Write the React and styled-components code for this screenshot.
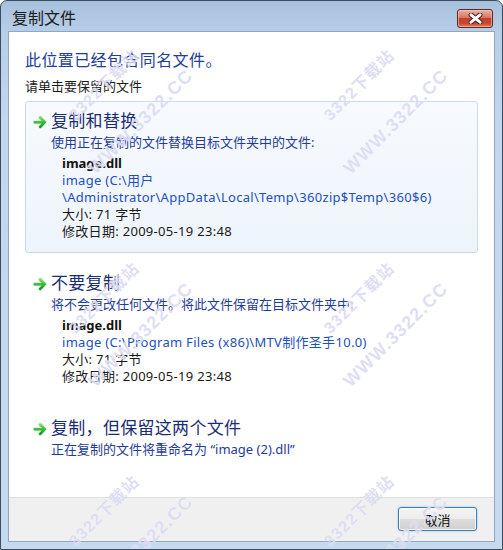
import React from 'react';
import styled, { createGlobalStyle } from 'styled-components';

const GlobalStyle = createGlobalStyle`
  html, body {
    margin: 0;
    padding: 0;
    background: #ffffff;
  }
  body {
    font-family: "Noto Sans", "Noto Sans CJK SC", sans-serif;
  }
`;

const options = [
  {
    title: '复制和替换',
    note: '使用正在复制的文件替换目标文件夹中的文件:',
    active: true,
    file: {
      name: 'image.dll',
      path: ['image (C:\\用户', '\\Administrator\\AppData\\Local\\Temp\\360zip$Temp\\360$6)'],
      size: '大小: 71 字节',
      date: '修改日期: 2009-05-19 23:48',
    },
  },
  {
    title: '不要复制',
    note: '将不会更改任何文件。将此文件保留在目标文件夹中:',
    file: {
      name: 'image.dll',
      path: ['image (C:\\Program Files (x86)\\MTV制作圣手10.0)'],
      size: '大小: 71 字节',
      date: '修改日期: 2009-05-19 23:48',
    },
  },
  {
    title: '复制，但保留这两个文件',
    note: '正在复制的文件将重命名为 “image (2).dll”',
  },
];

// watermark tiles, repeated over the dialog
const marks = [];
for (let col = 0; col < 2; col++) {
  for (let row = 0; row < 3; row++) {
    marks.push({ text: '3322下载站', x: 102 + col * 255, y: 83 + row * 213, big: false });
    marks.push({ text: 'WWW.3322.CC', x: 140 + col * 255, y: 121 + row * 213, big: true });
  }
}

const ArrowIcon = () => (
  <svg width="15" height="14" viewBox="0 0 15 14">
    <defs>
      <linearGradient id="arrowGreen" x1="0" y1="0" x2="0" y2="1">
        <stop offset="0" stopColor="#6fdc5a" />
        <stop offset="1" stopColor="#12952a" />
      </linearGradient>
    </defs>
    <g fill="none" strokeLinecap="round" strokeLinejoin="round">
      <path d="M1.8 7.2 H11.6 M7.2 2.6 L11.8 7.2 L7.2 11.8" stroke="#d9f2d6" strokeWidth="4.4" />
      <path d="M1.8 7.2 H11.6 M7.2 2.6 L11.8 7.2 L7.2 11.8" stroke="url(#arrowGreen)" strokeWidth="2.6" />
    </g>
  </svg>
);

const CloseIcon = () => (
  <svg width="15" height="11" viewBox="0 0 15 11">
    <path d="M3 1.8 L12 9.2 M12 1.8 L3 9.2" stroke="#4a1a12" strokeWidth="4.8" strokeLinecap="round" />
    <path d="M3 1.8 L12 9.2 M12 1.8 L3 9.2" stroke="#ffffff" strokeWidth="3" strokeLinecap="round" />
  </svg>
);

const App = () => {
  return (
    <>
      <GlobalStyle />
      <Window>
        <TitleBar>
          <Title>复制文件</Title>
          <CloseButton aria-label="关闭">
            <CloseIcon />
          </CloseButton>
        </TitleBar>
        <Client>
          <Content>
            <Instruction>此位置已经包含同名文件。</Instruction>
            <Hint>请单击要保留的文件</Hint>
            <OptionList>
              {options.map(opt => (
                <Option key={opt.title} $active={opt.active}>
                  <OptionHead>
                    <ArrowBox>
                      <ArrowIcon />
                    </ArrowBox>
                    <OptionTitle>{opt.title}</OptionTitle>
                  </OptionHead>
                  <OptionBody>
                    <Note>{opt.note}</Note>
                    {opt.file && (
                      <FileInfo>
                        <FileName>{opt.file.name}</FileName>
                        {opt.file.path.map(p => (
                          <FilePath key={p}>{p}</FilePath>
                        ))}
                        <FileMeta>{opt.file.size}</FileMeta>
                        <FileMeta>{opt.file.date}</FileMeta>
                      </FileInfo>
                    )}
                  </OptionBody>
                </Option>
              ))}
            </OptionList>
          </Content>
          <Footer>
            <PushButton>取消</PushButton>
          </Footer>
        </Client>
        <Watermarks>
          {marks.map((m, i) => (
            <Mark key={i} $big={m.big} style={{ left: m.x, top: m.y }}>
              {m.text}
            </Mark>
          ))}
        </Watermarks>
      </Window>
    </>
  );
};

const Window = styled.div`
  position: relative;
  width: 503px;
  height: 550px;
  box-sizing: border-box;
  display: flex;
  flex-direction: column;
  border: 1px solid #3b4b60;
  border-radius: 7px 7px 0 0;
  padding: 0 7px 7px;
  background: linear-gradient(180deg, #a7c0dc 0px, #b7cee8 30px, #c2d7ee 120px, #c6daef 100%);
  overflow: hidden;
`;

const TitleBar = styled.div`
  height: 30px;
  display: flex;
  justify-content: space-between;
  align-items: flex-start;
  padding: 0 2px 0 4px;
`;

const Title = styled.div`
  margin-top: 6px;
  font-size: 16px;
  line-height: 20px;
  color: #1b1b1b;
  font-family: "Noto Sans CJK SC", sans-serif;
`;

const CloseButton = styled.div`
  margin-top: 8px;
  width: 36px;
  height: 19px;
  box-sizing: border-box;
  display: flex;
  align-items: center;
  justify-content: center;
  border: 1px solid #5a2a22;
  border-radius: 3px;
  background: linear-gradient(180deg, #eab1a3 0%, #d9765f 45%, #c0402a 50%, #c84a32 80%, #e07a5a 100%);
  box-shadow: inset 0 0 0 1px rgba(255, 210, 200, 0.55);
`;

const Client = styled.div`
  flex: 1;
  display: flex;
  flex-direction: column;
  border: 1px solid #8fa6c4;
  background: #ffffff;
`;

const Content = styled.div`
  padding: 17px 16px 0 16px;
  display: flex;
  flex-direction: column;
`;

const Instruction = styled.div`
  font-size: 16px;
  line-height: 22px;
  color: #1f3d9a;
  letter-spacing: 0.4px;
`;

const Hint = styled.div`
  margin-top: 6px;
  font-size: 13px;
  line-height: 18px;
  color: #1a1a1a;
`;

const OptionList = styled.div`
  margin-top: 6px;
  display: flex;
  flex-direction: column;
  gap: 10px;
`;

const Option = styled.div`
  border: 1px solid ${props => (props.$active ? '#c8dbf1' : 'transparent')};
  border-radius: 3px;
  background: ${props => (props.$active ? 'linear-gradient(180deg, #f7fafe, #eef4fc)' : 'transparent')};
  padding: 7px 10px 12px 7px;
`;

const OptionHead = styled.div`
  display: flex;
  align-items: center;
  gap: 3px;
`;

const ArrowBox = styled.span`
  display: flex;
  width: 15px;
  height: 14px;
  margin-top: 2px;
`;

const OptionTitle = styled.span`
  font-size: 17px;
  line-height: 24px;
  color: #1a2c72;
  letter-spacing: 0.3px;
`;

const OptionBody = styled.div`
  padding-left: 18px;
`;

const Note = styled.div`
  font-size: 13px;
  line-height: 18px;
  color: #1f3c98;
`;

const FileInfo = styled.div`
  margin-top: 4px;
  padding-left: 11px;
  font-size: 13px;
  line-height: 17px;
  letter-spacing: 0.3px;
`;

const FileName = styled.div`
  font-weight: bold;
  color: #111111;
  letter-spacing: 0;
`;

const FilePath = styled.div`
  color: #1d50bd;
  white-space: nowrap;
`;

const FileMeta = styled.div`
  color: #1a1a1a;
`;

const Footer = styled.div`
  margin-top: auto;
  height: 44px;
  box-sizing: border-box;
  border-top: 1px solid #dfdfdf;
  background: #f0f0f0;
  display: flex;
  justify-content: flex-end;
  align-items: flex-start;
  padding: 9px 17px 0 0;
`;

const PushButton = styled.div`
  width: 79px;
  height: 24px;
  box-sizing: border-box;
  display: flex;
  align-items: center;
  justify-content: center;
  border: 1px solid #3c7fb1;
  border-radius: 3px;
  background: linear-gradient(180deg, #f4f4f4 0%, #ececec 48%, #dddddd 52%, #cfcfcf 100%);
  box-shadow: inset 0 0 0 1px rgba(255, 255, 255, 0.75), 0 0 2px rgba(80, 170, 230, 0.7);
  font-size: 13px;
  color: #111111;
  font-family: "Noto Sans CJK SC", sans-serif;
`;

const Watermarks = styled.div`
  position: absolute;
  inset: 0;
  pointer-events: none;
  overflow: hidden;
`;

const Mark = styled.span`
  position: absolute;
  transform: translate(-50%, -50%) rotate(-45deg);
  white-space: nowrap;
  font-family: "Liberation Sans", "Noto Sans CJK SC", sans-serif;
  font-weight: bold;
  font-size: ${props => (props.$big ? '18px' : '16px')};
  letter-spacing: 1.2px;
  color: rgba(190, 190, 232, 0.5);
  text-shadow: 0 0 1px rgba(255, 255, 255, 0.9);
`;

export default App;
